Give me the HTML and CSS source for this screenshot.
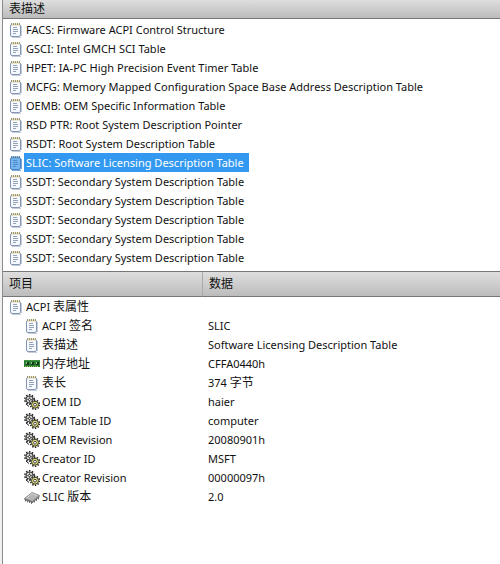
FILE: index.html
```html
<!DOCTYPE html>
<html lang="zh-CN">
<head>
  <meta charset="UTF-8" />
  <meta name="viewport" content="width=device-width, initial-scale=1" />
  <title>ACPI</title>
  <link rel="stylesheet" href="styles.css">
</head>
<body>

  <svg class="sprite" aria-hidden="true">
    <symbol id="note" viewBox="0 0 16 16">
      <rect x="2.5" y="2.5" width="10" height="12" rx="1.5" fill="#f6faff" stroke="#8496b4" />
      <path d="M13.5 4v10M4 15.5h9" stroke="#c3ccd9" fill="none" />
      <path d="M3 2.5h9" stroke="#e0d8a8" stroke-width="2" />
      <path d="M3.5 1v2M5.5 1v2M7.5 1v2M9.5 1v2M11.5 1v2" stroke="#8a836c" stroke-width=".8" />
      <path d="M5 5.5h4M5 7.5h5M5 9.5h5M5 11.5h3" stroke="#93a2b9" />
    </symbol>
    <symbol id="note-on" viewBox="0 0 16 16">
      <rect x="2.5" y="2.5" width="10" height="12" rx="1.5" fill="#78b4ee" stroke="#4a83c2" />
      <path d="M13.5 4v10M4 15.5h9" stroke="#75a9df" fill="none" />
      <path d="M3 2.5h9" stroke="#6d9fc8" stroke-width="2" />
      <path d="M3.5 1v2M5.5 1v2M7.5 1v2M9.5 1v2M11.5 1v2" stroke="#4777a3" stroke-width=".8" />
      <path d="M5 5.5h4M5 7.5h5M5 9.5h5M5 11.5h3" stroke="#4c8dd2" />
    </symbol>
    <symbol id="memory" viewBox="0 0 16 16">
      <path d="M0 4h16v7H0z" fill="#2a7d31" />
      <path d="M0 4.5h16" stroke="#3c963d" />
      <path d="M2 6h3v3H2zM7 6h3v3H7zM12 6h3v3h-3z" fill="#143a18" />
      <path d="M2.5 6v2M7.5 6v2M12.5 6v2" stroke="#8cc58b" />
      <path d="M1 10.5h14" stroke="#a5bd66" stroke-dasharray="1 1" />
    </symbol>
    <symbol id="gears" viewBox="0 0 16 16">
      <circle cx="5.5" cy="5.5" r="4.7" fill="none" stroke="#222" stroke-width="1.6" stroke-dasharray="1.5 1.5" />
      <circle cx="5.5" cy="5.5" r="3.6" fill="#d8d8d4" stroke="#333" />
      <path d="M5.5 2v7M2 5.5h7" stroke="#555" stroke-width=".8" />
      <circle cx="5.5" cy="5.5" r="1.1" fill="#fff" stroke="#222" stroke-width=".8" />
      <circle cx="11" cy="10.7" r="4.5" fill="#fff" stroke="#222" stroke-width="1.6" stroke-dasharray="1.4 1.4" />
      <circle cx="11" cy="10.7" r="3.5" fill="#dedb88" stroke="#3b3918" />
      <circle cx="11" cy="10.7" r="1.4" fill="#fff" stroke="#222" stroke-width=".8" />
      <path d="M2 10l3 2.5" stroke="#222" />
    </symbol>
    <symbol id="chip" viewBox="0 0 16 16">
      <path d="M.5 9.5L8 3.5l7.5 3-7 6z" fill="#b4b4b4" stroke="#777" stroke-width=".8" />
      <path d="M.5 9.5l8 3 7-6V8l-7 6-8-3z" fill="#6b6b6b" />
      <path d="M1.5 11v1.5M3.5 12v1.5M5.5 12.5V14M7.5 13v2M10.5 12v1.5M12.5 10v2M14.5 8.5v2" stroke="#555" stroke-width=".8" />
      <path d="M2.5 9L8 4.6l5 2" stroke="#e2e2e2" fill="none" stroke-width=".8" />
    </symbol>
  </svg>

  <main class="window">
    <table class="pane list">
      <thead>
        <tr><th scope="col">表描述</th></tr>
      </thead>
      <tbody>
        <tr><td><div class="item"><svg class="icon"><use href="#note" /></svg><span class="label">FACS: Firmware ACPI Control Structure</span></div></td></tr>
        <tr><td><div class="item"><svg class="icon"><use href="#note" /></svg><span class="label">GSCI: Intel GMCH SCI Table</span></div></td></tr>
        <tr><td><div class="item"><svg class="icon"><use href="#note" /></svg><span class="label">HPET: IA-PC High Precision Event Timer Table</span></div></td></tr>
        <tr><td><div class="item"><svg class="icon"><use href="#note" /></svg><span class="label">MCFG: Memory Mapped Configuration Space Base Address Description Table</span></div></td></tr>
        <tr><td><div class="item"><svg class="icon"><use href="#note" /></svg><span class="label">OEMB: OEM Specific Information Table</span></div></td></tr>
        <tr><td><div class="item"><svg class="icon"><use href="#note" /></svg><span class="label">RSD PTR: Root System Description Pointer</span></div></td></tr>
        <tr><td><div class="item"><svg class="icon"><use href="#note" /></svg><span class="label">RSDT: Root System Description Table</span></div></td></tr>
        <tr><td><div class="item selected"><svg class="icon"><use href="#note-on" /></svg><span class="label">SLIC: Software Licensing Description Table</span></div></td></tr>
        <tr><td><div class="item"><svg class="icon"><use href="#note" /></svg><span class="label">SSDT: Secondary System Description Table</span></div></td></tr>
        <tr><td><div class="item"><svg class="icon"><use href="#note" /></svg><span class="label">SSDT: Secondary System Description Table</span></div></td></tr>
        <tr><td><div class="item"><svg class="icon"><use href="#note" /></svg><span class="label">SSDT: Secondary System Description Table</span></div></td></tr>
        <tr><td><div class="item"><svg class="icon"><use href="#note" /></svg><span class="label">SSDT: Secondary System Description Table</span></div></td></tr>
        <tr><td><div class="item"><svg class="icon"><use href="#note" /></svg><span class="label">SSDT: Secondary System Description Table</span></div></td></tr>
      </tbody>
    </table>

    <table class="pane details">
      <thead>
        <tr><th scope="col" class="field">项目</th><th scope="col">数据</th></tr>
      </thead>
      <tbody>
        <tr><td><div class="item"><svg class="icon"><use href="#note" /></svg><span class="label">ACPI <span class="zh">表属性</span></span></div></td><td></td></tr>
        <tr><td><div class="item child"><svg class="icon"><use href="#note" /></svg><span class="label">ACPI <span class="zh">签名</span></span></div></td><td>SLIC</td></tr>
        <tr><td><div class="item child"><svg class="icon"><use href="#note" /></svg><span class="label zh">表描述</span></div></td><td>Software Licensing Description Table</td></tr>
        <tr><td><div class="item child"><svg class="icon"><use href="#memory" /></svg><span class="label zh">内存地址</span></div></td><td>CFFA0440h</td></tr>
        <tr><td><div class="item child"><svg class="icon"><use href="#note" /></svg><span class="label zh">表长</span></div></td><td>374 <span class="zh">字节</span></td></tr>
        <tr><td><div class="item child"><svg class="icon"><use href="#gears" /></svg><span class="label">OEM ID</span></div></td><td>haier</td></tr>
        <tr><td><div class="item child"><svg class="icon"><use href="#gears" /></svg><span class="label">OEM Table ID</span></div></td><td>computer</td></tr>
        <tr><td><div class="item child"><svg class="icon"><use href="#gears" /></svg><span class="label">OEM Revision</span></div></td><td>20080901h</td></tr>
        <tr><td><div class="item child"><svg class="icon"><use href="#gears" /></svg><span class="label">Creator ID</span></div></td><td>MSFT</td></tr>
        <tr><td><div class="item child"><svg class="icon"><use href="#gears" /></svg><span class="label">Creator Revision</span></div></td><td>00000097h</td></tr>
        <tr><td><div class="item child"><svg class="icon"><use href="#chip" /></svg><span class="label">SLIC <span class="zh">版本</span></span></div></td><td>2.0</td></tr>
      </tbody>
    </table>
  </main>

</body>
</html>
```
FILE: styles.css
```css
* {
  box-sizing: border-box;
}

body {
  margin: 0;
  padding-left: 2px;
  font-family: "Noto Sans", "Noto Sans CJK SC", sans-serif;
  font-size: 11px;
  line-height: 19px;
  color: #111;
  background-color: #f0f0f0;
}

.sprite {
  display: none;
}

.window {
  min-height: 100vh;
  border-left: 1px solid #8a8c90;
  background-color: white;
}

.pane {
  width: 100%;
  border-collapse: separate;
  border-spacing: 0;
  table-layout: fixed;
}

th {
  padding: 0 6px;
  text-align: left;
  font-size: 12px;
  font-weight: normal;
  background: linear-gradient(#dedede, #bcbcbc);
  border-bottom: 1px solid #777;
}

td {
  height: 19px;
  padding: 0 5px;
  white-space: nowrap;
}

/* table list */
.list {
  padding-bottom: 4px;
}

.list th {
  line-height: 18px;
}

.list tbody::before {
  content: "";
  display: block;
  height: 1px;
}

/* properties of the selected table */
.details {
  border-top: 1px solid #777;
}

.details th {
  line-height: 24px;
}

.details .field {
  width: 200px;
  border-right: 1px solid #a9a9a9;
}

.item {
  display: flex;
  align-items: center;
  height: 19px;
}

.child {
  padding-left: 16px;
}

.icon {
  flex: none;
  width: 16px;
  height: 16px;
}

.label {
  padding: 0 5px 0 2px;
}

/* Chinese text runs slightly larger than the Latin text */
.zh {
  font-size: 12px;
  line-height: 1;
}

.selected .label {
  color: white;
  background-color: #3399f0;
}
```
